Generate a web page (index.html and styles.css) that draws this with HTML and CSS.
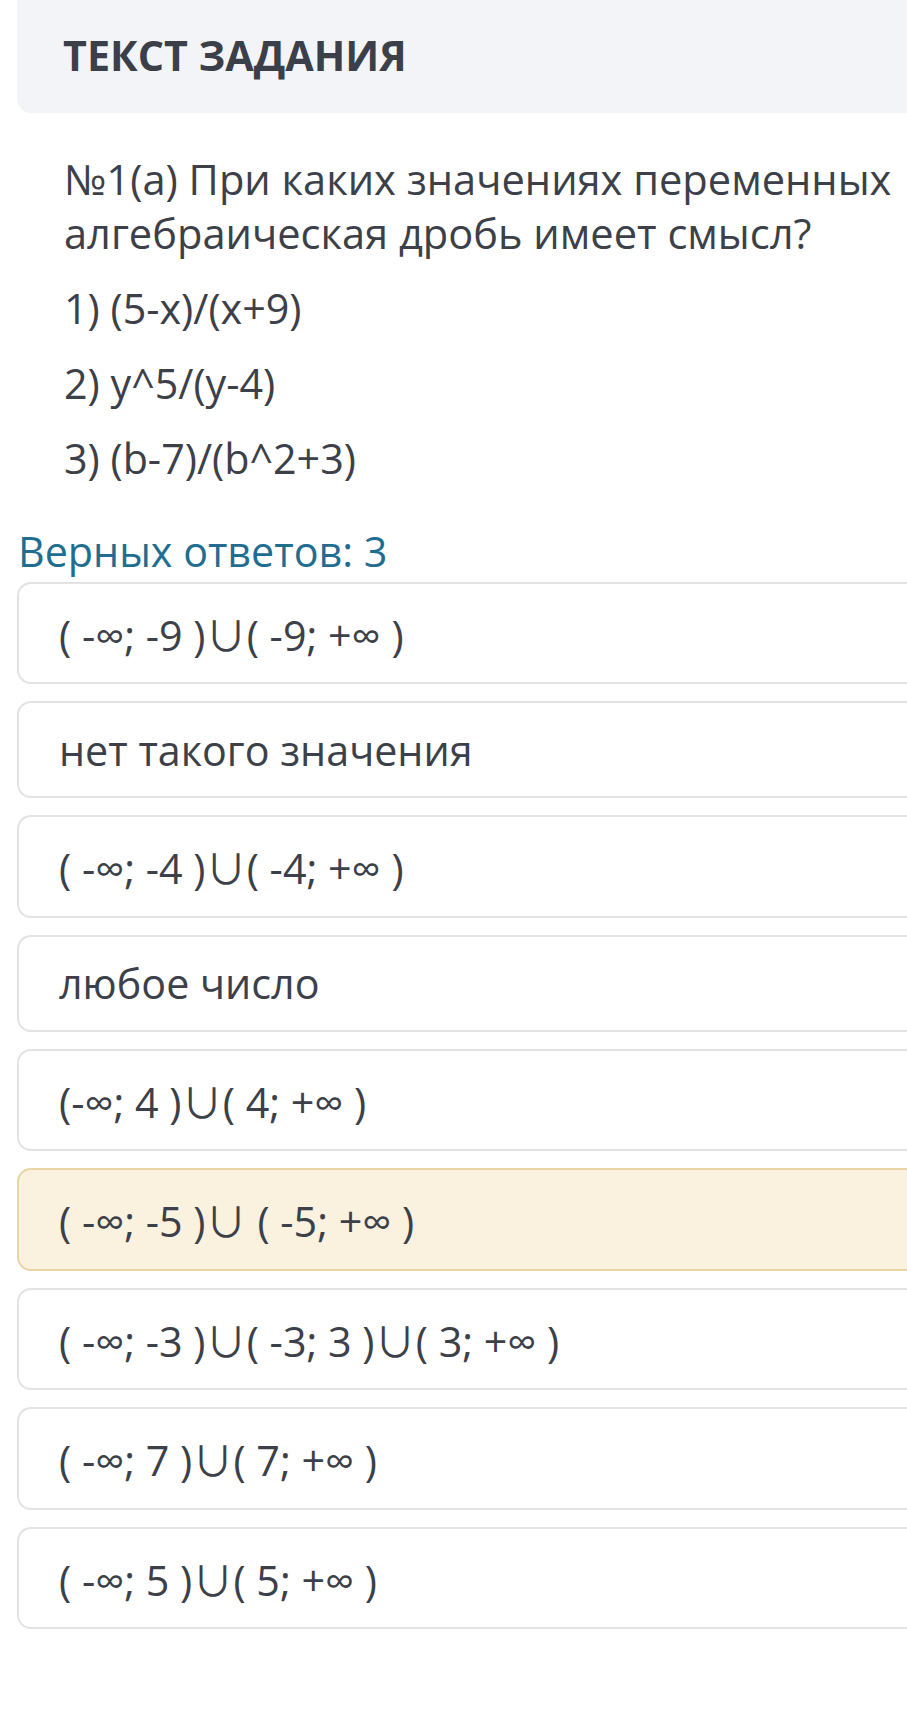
FILE: index.html
```html
<!DOCTYPE html>
<html lang="ru">
<head>
<meta charset="utf-8">
<title>Текст задания</title>
<link rel="stylesheet" href="styles.css">
</head>
<body>
<div class="page">
  <div class="task-head">
    <h2 class="task-title">ТЕКСТ ЗАДАНИЯ</h2>
  </div>
  <div class="task-body">
    <p class="question">№1(а) При каких значениях переменных алгебраическая дробь имеет смысл?</p>
    <p class="item item--first">1) (5-x)/(x+9)</p>
    <p class="item">2) y^5/(y-4)</p>
    <p class="item">3) (b-7)/(b^2+3)</p>
  </div>
  <div class="answers-label">Верных ответов: 3</div>
  <ul class="options">
    <li class="opt opt--math">( -∞; -9 )∪( -9; +∞ )</li>
    <li class="opt">нет такого значения</li>
    <li class="opt opt--math">( -∞; -4 )∪( -4; +∞ )</li>
    <li class="opt">любое число</li>
    <li class="opt opt--math">(-∞; 4 )∪( 4; +∞ )</li>
    <li class="opt opt--math opt--selected">( -∞; -5 )∪ ( -5; +∞ )</li>
    <li class="opt opt--math">( -∞; -3 )∪( -3; 3 )∪( 3; +∞ )</li>
    <li class="opt opt--math">( -∞; 7 )∪( 7; +∞ )</li>
    <li class="opt opt--math">( -∞; 5 )∪( 5; +∞ )</li>
  </ul>
</div>
</body>
</html>
```
FILE: styles.css
```css
html, body {
  margin: 0;
  padding: 0;
  background: #ffffff;
  overflow: hidden;
}
body {
  font-family: "Open Sans", "Noto Sans CJK SC", sans-serif;
  color: #3c4049;
}
.page {
  width: 1000px;
  padding-left: 17px;
  margin-top: -10px;
}
.task-head {
  background: #f3f4f7;
  border-radius: 14px;
  padding: 37px 0 29.5px 46px;
}
.task-title {
  margin: 0;
  font-size: 41.25px;
  font-weight: 700;
  line-height: normal;
  color: #3a3f49;
}
.task-body {
  padding-left: 47px;
  padding-top: 39.5px;
}
.question {
  margin: 0;
  font-size: 41.6px;
  line-height: 54px;
  max-width: 860px;
}
.item {
  margin: 21.5px 0 0 0;
  font-size: 41.25px;
  line-height: 53.6px;
}
.item--first {
  margin-top: 22px;
}
.answers-label {
  margin-top: 37px;
  padding-left: 1px;
  font-size: 41.25px;
  line-height: normal;
  color: #1f6e91;
}
.options {
  list-style: none;
  margin: 3px 0 0 0;
  padding: 0;
  display: flex;
  flex-direction: column;
  gap: 17px;
}
.opt {
  border: 2px solid #e3e3e3;
  border-radius: 14px;
  background: #ffffff;
  padding: 0 40px;
  font-size: 41.25px;
  line-height: 56.2px;
  height: 97px;
  box-sizing: border-box;
  display: flex;
  align-items: center;
}
.opt--math {
  height: 102.5px;
  padding-top: 4px;
}
.opt--selected {
  background: #faf1df;
  border-color: #e9d4a4;
}
```
